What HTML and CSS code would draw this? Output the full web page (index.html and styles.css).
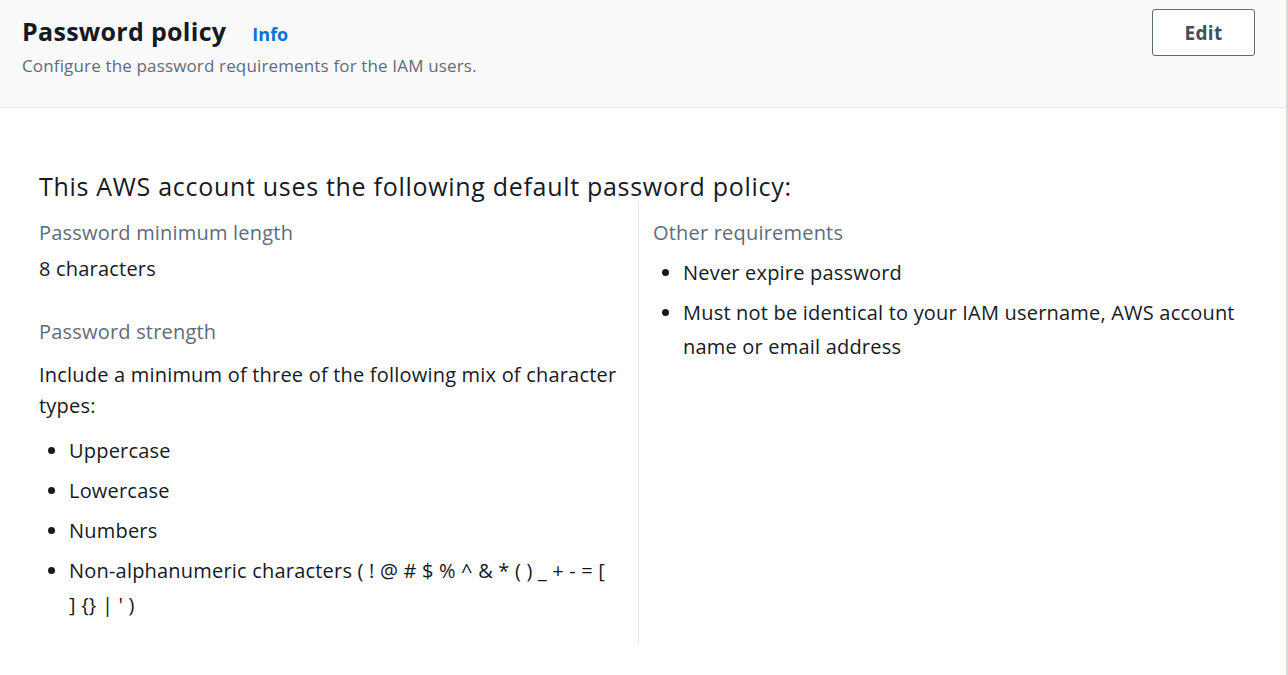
FILE: index.html
```html
<!DOCTYPE html>
<html>
<head>
<meta charset="utf-8">
<link rel="stylesheet" href="styles.css">
</head>
<body>
<div class="container">
  <div class="header">
    <div class="header-text">
      <div class="title-row">
        <h2 class="title">Password policy</h2>
        <a class="info">Info</a>
      </div>
      <p class="desc">Configure the password requirements for the IAM users.</p>
    </div>
    <button class="edit">Edit</button>
  </div>
  <div class="content">
    <h3 class="policy-head">This AWS account uses the following default password policy:</h3>
    <div class="columns">
      <div class="col col-left">
        <div class="label">Password minimum length</div>
        <div class="value">8 characters</div>
        <div class="label label-gap">Password strength</div>
        <p class="para">Include a minimum of three of the following mix of character types:</p>
        <ul class="list list-left">
          <li>Uppercase</li>
          <li>Lowercase</li>
          <li>Numbers</li>
          <li>Non-alphanumeric characters ( ! @ # $ % ^ &amp; * ( ) _ + - = [ ] {} | ' )</li>
        </ul>
      </div>
      <div class="col col-right">
        <div class="label">Other requirements</div>
        <ul class="list list-right">
          <li>Never expire password</li>
          <li>Must not be identical to your IAM username, AWS account name or email address</li>
        </ul>
      </div>
    </div>
  </div>
</div>
</body>
</html>
```
FILE: styles.css
```css
html, body {
  margin: 0;
  padding: 0;
  background: #ffffff;
}
body {
  font-family: "Open Sans", "Noto Sans", sans-serif;
  color: #16191f;
}
.container {
  width: 1286px;
  height: 675px;
  border-right: 2px solid #d5dbdb;
  box-sizing: content-box;
}
.header {
  display: flex;
  justify-content: space-between;
  align-items: flex-start;
  background: #fafafa;
  border-bottom: 1px solid #e9ebed;
  height: 108px;
  padding: 0 31px 0 22px;
  box-sizing: border-box;
}
.title-row {
  display: flex;
  align-items: baseline;
  gap: 26px;
  margin-top: 14px;
}
.title {
  margin: 0;
  font-size: 25px;
  font-weight: 700;
  color: #16191f;
  letter-spacing: 0.3px;
}
.info {
  font-size: 18px;
  font-weight: 700;
  color: #0972d3;
}
.desc {
  margin: 6px 0 0;
  font-size: 17px;
  letter-spacing: 0.15px;
  color: #5f6b7a;
}
.edit {
  margin-top: 9px;
  width: 103px;
  height: 47px;
  background: #ffffff;
  border: 1px solid #5f6b7a;
  border-radius: 3px;
  font-family: inherit;
  font-size: 19px;
  font-weight: 700;
  letter-spacing: 0.3px;
  color: #414d5c;
}
.content {
  padding: 63px 0 0 39px;
}
.policy-head {
  margin: 0;
  font-size: 25px;
  font-weight: 400;
  letter-spacing: 0.7px;
  color: #16191f;
  line-height: 30px;
}
.columns {
  display: grid;
  grid-template-columns: 600px 1fr;
}
.col-left {
  border-right: 1px solid #e9ebed;
  height: 443px;
  padding-right: 11px;
}
.col-right {
  padding-left: 14px;
  padding-right: 40px;
}
.label {
  font-size: 20px;
  letter-spacing: 0.2px;
  color: #5f6b7a;
  line-height: 24px;
  margin-top: 20px;
}
.label-gap {
  margin-top: 39px;
}
.value {
  font-size: 20px;
  letter-spacing: 0.2px;
  line-height: 24px;
  margin-top: 12px;
}
.para {
  font-size: 20px;
  letter-spacing: 0.2px;
  line-height: 31px;
  margin: 15px 0 0;
}
.list {
  margin: 13px 0 0;
  padding-left: 30px;
  font-size: 20px;
  letter-spacing: 0.2px;
  line-height: 34px;
}
.list li {
  margin-bottom: 6px;
}
.list-left {
  padding-right: 13px;
}
.list-right {
  margin-top: 11px;
}
```
